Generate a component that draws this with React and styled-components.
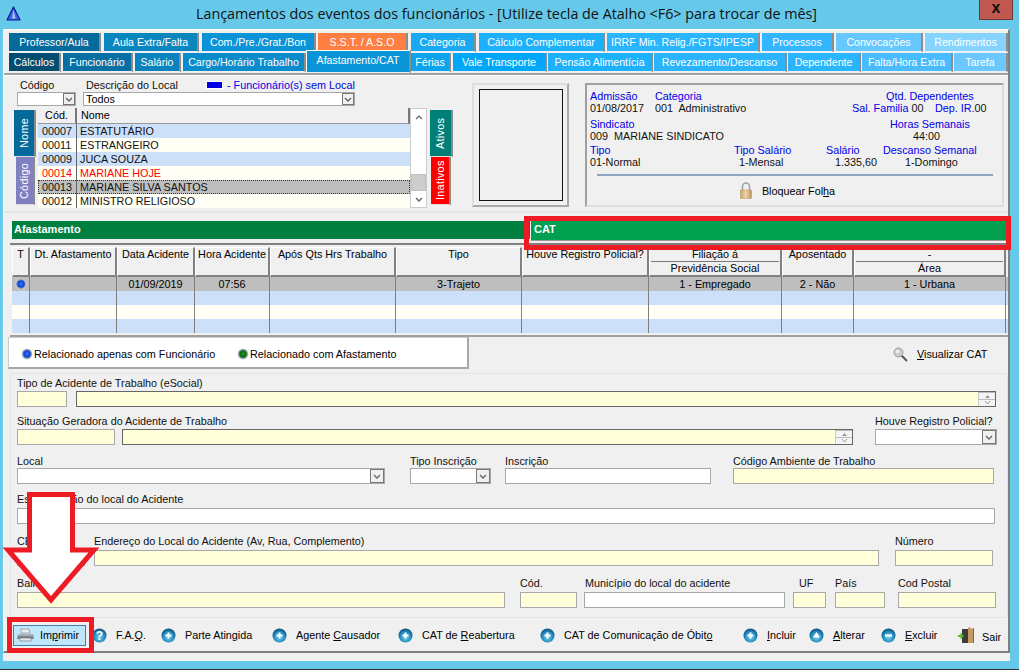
import React from 'react';
import styled, { createGlobalStyle } from 'styled-components';

const FONT = `'Liberation Sans', Arial, sans-serif`;

const GlobalStyle = createGlobalStyle`
  html, body { margin: 0; padding: 0; background: #66c9ea; }
  * { box-sizing: border-box; }
  body { font-family: ${FONT}; font-size: 10.8px; color: #000; }
`;

const Root = styled.div`
  position: relative;
  width: 1019px;
  height: 670px;
  overflow: hidden;
  background: #66c9ea;
  border-bottom: 1px solid #333;
`;

const TitleBar = styled.div`
  display: flex;
  align-items: flex-start;
  height: 29px;
  padding-left: 6px;
`;

const Logo = styled.svg`
  width: 15px;
  height: 15px;
  margin-top: 6px;
`;

const Title = styled.div`
  flex: 1;
  text-align: center;
  font-family: 'Open Sans', 'Noto Sans', sans-serif;
  font-size: 14.35px;
  line-height: 28px;
  color: #111;
  white-space: nowrap;
  padding-left: 13px;
`;

const CloseButton = styled.div`
  width: 34px;
  height: 20px;
  margin-right: 6px;
  background: #c0584f;
  border: 1px solid #6e3a36;
  border-top: 0;
  color: #111;
  font: bold 16px/15px 'Liberation Sans', sans-serif;
  text-align: center;
`;

const Body = styled.div`
  width: 1007px;
  height: 632px;
  margin-left: 3px;
  background: #f0f0f0;
`;

const Frame = styled.div`
  height: 624px;
  border-right: 2px solid #808080;
  border-bottom: 2px solid #808080;
  border-top: 1px solid #fff;
  border-left: 1px solid #fff;
`;

const TabRows = styled.div`
  padding: 3px 0 0 5px;
`;

const TabRow = styled.div`
  display: flex;
  height: 20px;
`;

const Tab = styled.div`
  width: ${(p) => p.$w}px;
  margin-right: ${(p) => p.$gap}px;
  height: ${(p) => (p.$active ? 23 : 19)}px;
  margin-top: ${(p) => (p.$active ? -3 : 0)}px;
  position: relative;
  z-index: ${(p) => (p.$active ? 2 : 0)};
  background: ${(p) => p.$bg};
  color: #fff;
  border-right: 2px solid #8c8c8c;
  border-bottom: 1px solid #f0f0f0;
  border-top: ${(p) => (p.$active ? '1px solid #fff' : '0')};
  border-left: ${(p) => (p.$active ? '1px solid #fff' : '0')};
  text-align: center;
  font-size: 10.6px;
  line-height: ${(p) => (p.$active ? 19 : 18)}px;
  white-space: nowrap;
  overflow: hidden;
`;

const TopPanel = styled.div`
  display: flex;
  height: 140px;
  border-top: 2px solid #a0a0a0;
  border-bottom: 2px solid #e4e4e4;
  box-shadow: inset 0 1px 0 #fff;
  padding: 2px 0 0 10px;
`;

const LeftColumn = styled.div`
  width: 415px;
  flex: none;
`;

const FilterRow = styled.div`
  display: flex;
`;

const Field = styled.div`
  width: ${(p) => p.$w}px;
  margin-left: ${(p) => p.$ml || 0}px;
  flex: none;
`;

const Label = styled.div`
  display: flex;
  align-items: center;
  height: 15px;
  line-height: 14px;
  white-space: nowrap;
  padding-left: ${(p) => p.$pad || 0}px;
  color: #111;
`;

const LocalLabel = styled.span`
  width: 121px;
  flex: none;
`;

const Swatch = styled.span`
  width: 15px;
  height: 6px;
  margin-right: 5px;
  background: #0000e0;
  box-shadow: 0 0 0 1px #fff;
  flex: none;
`;

const BlueText = styled.span`
  color: #0000e6;
`;

const Input = styled.div`
  position: relative;
  display: flex;
  justify-content: flex-end;
  align-items: center;
  height: ${(p) => p.$h || 16}px;
  background: ${(p) => (p.$yellow ? '#ffffd9' : '#fff')};
  border: 1px solid ${(p) => (p.$dark ? '#666' : '#a8a8a8')};
  line-height: 12px;
  padding-left: 2px;
`;

const InputText = styled.span`
  flex: 1;
`;

const ComboButton = styled.div`
  width: ${(p) => p.$size}px;
  height: ${(p) => p.$size}px;
  display: flex;
  align-items: center;
  justify-content: center;
  background: #f0f0f0;
  border: 1px solid #777;
`;

const Spinner = styled.div`
  display: flex;
  flex-direction: column;
  width: 17px;
  height: 14px;
  border-left: 1px solid #ccc;
`;

const SpinPart = styled.div`
  flex: 1;
  display: flex;
  align-items: center;
  justify-content: center;
  background: #f4f4f4;
  border-top: 1px solid #bbb;
`;

const ListArea = styled.div`
  display: flex;
  margin-top: 2px;
`;

const SideTabs = styled.div`
  display: flex;
  flex-direction: column;
  padding-top: 2px;
  width: ${(p) => p.$w}px;
  flex: none;
`;

const SideTab = styled.div`
  height: ${(p) => p.$h}px;
  width: ${(p) => p.$tabw || 22}px;
  margin-left: ${(p) => p.$ml || 0}px;
  background: ${(p) => p.$bg};
  color: #fff;
  writing-mode: vertical-rl;
  transform: rotate(180deg);
  display: flex;
  align-items: center;
  justify-content: center;
  line-height: 1;
  letter-spacing: 0.3px;
  border-left: 2px solid #8a8a8a;
  border-top: 1px solid #ddd;
`;

const EmployeeTable = styled.div`
  width: 372px;
  flex: none;
  margin-left: 2px;
`;

const TableHead = styled.div`
  display: flex;
  height: 16px;
  background: #f0f0f0;
  line-height: 15px;
`;

const TableHeadCell = styled.div`
  width: ${(p) => p.$w}px;
  text-align: ${(p) => (p.$center ? 'center' : 'left')};
  padding-left: ${(p) => (p.$center ? 0 : 4)}px;
  border-right: 2px solid #777;
  border-bottom: 1px solid #999;
`;

const EmpRow = styled.div`
  display: flex;
  height: 14px;
  line-height: 14px;
  background: ${(p) => p.$bg};
  color: ${(p) => p.$color || '#111'};
  outline: ${(p) => (p.$selected ? '1px dotted #333' : 'none')};
  outline-offset: -1px;
`;

const EmpCode = styled.div`
  width: 39px;
  padding-left: 4px;
  border-right: 1px solid #666;
`;

const EmpName = styled.div`
  flex: 1;
  padding-left: 3px;
`;

const ScrollBar = styled.div`
  display: flex;
  flex-direction: column;
  width: 17px;
  height: 100px;
  background: #fff;
  border: 1px solid #ccc;
  flex: none;
`;

const ScrollArrow = styled.div`
  height: 16px;
  display: flex;
  align-items: center;
  justify-content: center;
`;

const ScrollTrack = styled.div`
  flex: 1;
  display: flex;
  flex-direction: column;
  justify-content: flex-end;
`;

const ScrollThumb = styled.div`
  height: 17px;
  background: #cdcdcd;
  border: 1px solid #c0c0c0;
`;

const PhotoFrame = styled.div`
  width: 97px;
  height: 124px;
  margin: 6px 0 0 43px;
  padding: 4px 4px 4px 5px;
  border: 2px solid #a8a8a8;
  border-top-color: #ddd;
  border-left-color: #ddd;
  flex: none;
`;

const PhotoInner = styled.div`
  height: 100%;
  border: 1px solid #111;
`;

const InfoPanel = styled.div`
  width: 419px;
  height: 124px;
  margin: 6px 0 0 16px;
  padding: 5px 0 0 3px;
  border: 2px solid #a0a0a0;
  border-right-color: #ddd;
  border-bottom-color: #ddd;
  line-height: 12px;
  flex: none;
`;

const InfoLine = styled.div`
  display: flex;
  white-space: nowrap;
  margin-top: ${(p) => p.$mt || 0}px;
`;

const InfoCell = styled.div`
  flex: none;
  width: ${(p) => (p.$w ? `${p.$w}px` : 'auto')};
  color: ${(p) => (p.$blue ? '#0000e6' : '#111')};
`;

const InfoDivider = styled.div`
  height: 2px;
  width: 396px;
  margin: 6px 0 0 7px;
  background: #8fa5c0;
`;

const LockRow = styled.div`
  display: flex;
  align-items: center;
  justify-content: center;
  gap: 10px;
  margin-top: 6px;
  padding-right: 17px;
`;

const SectionBars = styled.div`
  display: flex;
  align-items: flex-start;
  height: 30px;
  padding: 8px 0 0 8px;
`;

const LeftBar = styled.div`
  width: 518px;
  height: 18px;
  background: #008040;
  color: #fff;
  font-size: 11px;
  font-weight: bold;
  line-height: 17px;
  padding-left: 2px;
`;

const RightBar = styled.div`
  width: 477px;
  height: 21px;
  margin-top: -1px;
  background: #00a050;
  color: #fff;
  font-size: 11px;
  font-weight: bold;
  line-height: 18px;
  padding-left: 3px;
  border-left: 1px solid #fff;
  border-bottom: 1px solid #999;
`;

const COLS = '18px 87px 78px 75px 126px 126px 127px 133px 72px 152px';

const Grid = styled.div`
  margin-left: 6px;
  width: 998px;
  border-top: 2px solid #808080;
  border-bottom: 2px solid #a0a0a0;
  padding: 2px 0 2px 2px;
`;

const GridHead = styled.div`
  display: grid;
  grid-template-columns: ${COLS};
  height: 30px;
`;

const HeadCell = styled.div`
  text-align: center;
  line-height: 13px;
  border-top: 1px solid #fff;
  border-left: 1px solid #fff;
  border-right: 2px solid #808080;
  border-bottom: 2px solid #808080;
  white-space: nowrap;
  overflow: hidden;
`;

const HeadLine = styled.div`
  height: 14px;
  border-bottom: ${(p) => (p.$rule ? '1px solid #777' : '0')};
  margin: 0 1px;
`;

const GridRow = styled.div`
  display: grid;
  grid-template-columns: ${COLS};
  height: 14px;
  background: ${(p) => p.$bg};
`;

const GridCell = styled.div`
  display: flex;
  align-items: center;
  justify-content: center;
  line-height: 14px;
  border-right: 1px solid #808080;
`;

const LegendRow = styled.div`
  display: flex;
  align-items: center;
  height: 32px;
`;

const LegendBox = styled.div`
  display: flex;
  align-items: center;
  width: 461px;
  height: 32px;
  margin-left: 4px;
  padding: 2px 0 0 12px;
  background: #fff;
  border: 1px solid #ccc;
  border-right: 2px solid #a8a8a8;
  border-bottom: 2px solid #a8a8a8;
`;

const LegendItem = styled.div`
  display: flex;
  align-items: center;
  gap: 1px;
  width: ${(p) => p.$w}px;
  flex: none;
  white-space: nowrap;
`;

const ViewLink = styled.div`
  display: flex;
  align-items: center;
  gap: 9px;
  margin: 2px 0 0 424px;
  white-space: nowrap;
`;

const FormBox = styled.div`
  width: 998px;
  height: 245px;
  margin: 4px 0 0 6px;
  padding: 2px 0 0 6px;
  border: 1px solid #dfe6ea;
  border-radius: 3px;
`;

const FormRow = styled.div`
  display: flex;
  align-items: flex-end;
  margin-top: ${(p) => p.$mt || 0}px;

  ${Label} {
    padding-bottom: ${(p) => p.$lift || 0}px;
  }
`;

const Toolbar = styled.div`
  display: flex;
  align-items: center;
  height: 33px;
  padding: 1px 0 0 9px;
`;

const PrintButton = styled.div`
  display: flex;
  align-items: center;
  gap: 6px;
  width: 73px;
  height: 21px;
  margin-right: 6px;
  padding-left: 3px;
  background: #bee6fd;
  border: 1px solid #3c7fb1;
  flex: none;
`;

const ToolItem = styled.div`
  display: flex;
  align-items: center;
  gap: ${(p) => p.$gap || 9}px;
  width: ${(p) => p.$w}px;
  flex: none;
  white-space: nowrap;
`;

const ExitText = styled.span`
  padding-top: 3px;
`;

const RedBox = styled.div`
  position: absolute;
  left: ${(p) => p.$x}px;
  top: ${(p) => p.$y}px;
  width: ${(p) => p.$w}px;
  height: ${(p) => p.$h}px;
  border: 5px solid #ed1c24;
  pointer-events: none;
`;

const ArrowMark = styled.svg`
  position: absolute;
  left: 0;
  top: 488px;
  width: 104px;
  height: 120px;
`;

const Chevron = () => (
  <svg width="8" height="5" viewBox="0 0 8 5">
    <path d="M1 1l3 3 3-3" fill="none" stroke="#666" strokeWidth="1.4" />
  </svg>
);

const ChevronUp = () => (
  <svg width="8" height="5" viewBox="0 0 8 5">
    <path d="M1 4l3-3 3 3" fill="none" stroke="#666" strokeWidth="1.2" />
  </svg>
);

const Combo = ({ text, h = 16 }) => (
  <Input $h={h}>
    <InputText>{text}</InputText>
    <ComboButton $size={h - 2}><Chevron /></ComboButton>
  </Input>
);

const SpinInput = () => (
  <Input $yellow $dark>
    <Spinner>
      <SpinPart><svg width="5" height="3"><path d="M0 3l2.5-3 2.5 3z" fill="#999" /></svg></SpinPart>
      <SpinPart><svg width="7" height="4"><path d="M1 0l2.5 3 2.5-3" fill="none" stroke="#999" /></svg></SpinPart>
    </Spinner>
  </Input>
);

const Orb = ({ kind }) => (
  <svg width="15" height="15" viewBox="0 0 15 15">
    <defs>
      <radialGradient id={`orb-${kind}`} cx="50%" cy="62%" r="58%">
        <stop offset="0" stopColor="#7fd0ee" />
        <stop offset="0.6" stopColor="#2a93c4" />
        <stop offset="1" stopColor="#0a5684" />
      </radialGradient>
    </defs>
    <circle cx="7.5" cy="7.5" r="7" fill={`url(#orb-${kind})`} />
    {kind === 'plus' && <path d="M7.5 4.5v6M4.5 7.5h6" stroke="#fff" strokeWidth="2" />}
    {kind === 'minus' && <path d="M4 7.5h7" stroke="#fff" strokeWidth="2.4" />}
    {kind === 'up' && <path d="M7.5 4l3.5 5.5H4z" fill="#fff" />}
    {kind === 'help' && (
      <text x="7.5" y="12" fontSize="12" fontWeight="bold" textAnchor="middle" fill="#fff" fontFamily="Liberation Sans">?</text>
    )}
  </svg>
);

const Dot = ({ color, id }) => (
  <svg width="12" height="12" viewBox="0 0 12 12">
    <defs>
      <radialGradient id={id} cx="50%" cy="50%" r="50%">
        <stop offset="0" stopColor={color[0]} />
        <stop offset="0.55" stopColor={color[1]} />
        <stop offset="0.8" stopColor="#8a9cb0" />
        <stop offset="1" stopColor="#d8dee4" />
      </radialGradient>
    </defs>
    <circle cx="6" cy="6" r="5.5" fill={`url(#${id})`} />
  </svg>
);

const PrinterIcon = () => (
  <svg width="17" height="14" viewBox="0 0 17 14" style={{ flex: 'none' }}>
    <path d="M4 1h8l1 4H4z" fill="#e8ecef" stroke="#8a9198" strokeWidth=".7" />
    <path d="M1 6h15l1 5H0z" fill="#7c858d" />
    <path d="M1 6h15v2H1z" fill="#a7afb6" />
    <path d="M3 10h11v3H3z" fill="#e4e8ec" stroke="#6a7178" strokeWidth=".6" />
  </svg>
);

const LockIcon = () => (
  <svg width="12" height="17" viewBox="0 0 12 17">
    <defs>
      <linearGradient id="lock-body" x1="0" x2="1" y1="0" y2="0">
        <stop offset="0" stopColor="#c9a26b" />
        <stop offset="0.5" stopColor="#f0d5a8" />
        <stop offset="1" stopColor="#b8935c" />
      </linearGradient>
    </defs>
    <path d="M2.5 8V4.5a3.5 3.5 0 0 1 7 0V8" fill="none" stroke="#9aa0a6" strokeWidth="1.5" />
    <rect x="0.5" y="8" width="11" height="8.5" fill="url(#lock-body)" stroke="#b8935c" strokeWidth=".5" />
  </svg>
);

const LensIcon = () => (
  <svg width="15" height="15" viewBox="0 0 15 15">
    <path d="M8 8l6 6" stroke="#555" strokeWidth="2" />
    <circle cx="5.5" cy="5.5" r="4.5" fill="#c8ccd0" stroke="#9a9a9a" />
    <circle cx="4.5" cy="4.5" r="1.8" fill="#eef0f2" />
  </svg>
);

const DoorIcon = () => (
  <svg width="16" height="16" viewBox="0 0 16 16">
    <path d="M4 2h12v14H4z" fill="#3c3c36" />
    <path d="M10 0l5 2v14h-5z" fill="#c79a63" />
    <path d="M15 1h1v15h-1z" fill="#8a6438" />
    <path d="M0 8h2.5V5.5L6 9l-3.5 3.5V10H0z" fill="#62b02e" />
  </svg>
);

const ROW_ONE = [
  ['Professor/Aula', 92, 3, '#046a9b'],
  ['Aula Extra/Falta', 95, 3, '#0a86bf'],
  ['Com./Pre./Grat./Bon', 114, 2, '#0a93d6'],
  ['S.S.T. / A.S.O', 90, 3, '#ff7f42'],
  ['Categoria', 65, 3, '#1aa8f0'],
  ['Cálculo Complementar', 126, 2, '#1eb0fb'],
  ['IRRF Min. Relig./FGTS/IPESP', 153, 2, '#2ab5ff'],
  ['Processos', 72, 2, '#33b5ff'],
  ['Convocações', 87, 2, '#66c8ff'],
  ['Rendimentos', 83, 0, '#85d4ff'],
];

const ROW_TWO = [
  ['Cálculos', 52, 2, '#034d70'],
  ['Funcionário', 70, 2, '#086fa4'],
  ['Salário', 46, 2, '#0a82bd'],
  ['Cargo/Horário Trabalho', 123, 0, '#0a8bcb'],
  ['Afastamento/CAT', 105, 0, '#0a94d8', true],
  ['Férias', 40, 2, '#0ca3ea'],
  ['Vale Transporte', 94, 1, '#00a7f9'],
  ['Pensão Alimentícia', 105, 1, '#1db0fb'],
  ['Revezamento/Descanso', 133, 1, '#2ab4fc'],
  ['Dependente', 73, 1, '#2ab5ff'],
  ['Falta/Hora Extra', 91, 1, '#48bcff'],
  ['Tarefa', 54, 0, '#6bc8ff'],
];

const EMPLOYEES = [
  ['00007', 'ESTATUTÁRIO', '#cce0fa'],
  ['00011', 'ESTRANGEIRO', '#fffff6'],
  ['00009', 'JUCA SOUZA', '#cce0fa'],
  ['00014', 'MARIANE HOJE', '#fffff6', '#ff0000'],
  ['00013', 'MARIANE SILVA SANTOS', '#bebebe', null, true],
  ['00012', 'MINISTRO RELIGIOSO', '#fffff6'],
];

const HEADERS = ['T', 'Dt. Afastamento', 'Data Acidente', 'Hora Acidente', 'Após Qts Hrs Trabalho', 'Tipo', 'Houve Registro Policial?'];

const App = () => (
  <Root>
    <GlobalStyle />
    <TitleBar>
      <Logo viewBox="0 0 15 15">
        <path d="M7.5 1L14 14H1z" fill="#3f63e6" stroke="#0a1a8c" strokeWidth="1.2" strokeLinejoin="round" />
        <path d="M7.5 3.5L9.5 12.5H6z" fill="#a8c4ff" />
      </Logo>
      <Title>Lançamentos dos eventos dos funcionários - [Utilize tecla de Atalho &lt;F6&gt; para trocar de mês]</Title>
      <CloseButton>x</CloseButton>
    </TitleBar>
    <Body>
      <Frame>
        <TabRows>
          <TabRow>
            {ROW_ONE.map(([t, w, g, bg]) => (
              <Tab key={t} $w={w} $gap={g} $bg={bg}>{t}</Tab>
            ))}
          </TabRow>
          <TabRow>
            {ROW_TWO.map(([t, w, g, bg, active]) => (
              <Tab key={t} $w={w} $gap={g} $bg={bg} $active={active}>{t}</Tab>
            ))}
          </TabRow>
        </TabRows>

        <TopPanel>
          <LeftColumn>
            <FilterRow>
              <Field $w={59} $ml={3}>
                <Label $pad={3}>Código</Label>
                <Combo h={14} />
              </Field>
              <Field $w={272} $ml={7}>
                <Label $pad={3}>
                  <LocalLabel>Descrição do Local</LocalLabel>
                  <Swatch />
                  <BlueText>- Funcionário(s) sem Local</BlueText>
                </Label>
                <Combo h={14} text="Todos" />
              </Field>
            </FilterRow>
            <ListArea>
              <SideTabs $w={22}>
                <SideTab $h={47} $bg="#046a9b">Nome</SideTab>
                <SideTab $h={48} $tabw={19} $ml={2} $bg="#8080c0">Código</SideTab>
              </SideTabs>
              <EmployeeTable>
                <TableHead>
                  <TableHeadCell $w={39} $center>Cód.</TableHeadCell>
                  <TableHeadCell $w={333}>Nome</TableHeadCell>
                </TableHead>
                {EMPLOYEES.map(([code, name, bg, color, sel]) => (
                  <EmpRow key={code} $bg={bg} $color={color} $selected={sel}>
                    <EmpCode>{code}</EmpCode>
                    <EmpName>{name}</EmpName>
                  </EmpRow>
                ))}
              </EmployeeTable>
              <ScrollBar>
                <ScrollArrow><ChevronUp /></ScrollArrow>
                <ScrollTrack><ScrollThumb /></ScrollTrack>
                <ScrollArrow><Chevron /></ScrollArrow>
              </ScrollBar>
              <SideTabs $w={24}>
                <SideTab $h={47} $tabw={23} $ml={3} $bg="#007f78">Ativos</SideTab>
                <SideTab $h={48} $tabw={20} $ml={4} $bg="#ff0000">Inativos</SideTab>
              </SideTabs>
            </ListArea>
          </LeftColumn>

          <PhotoFrame><PhotoInner /></PhotoFrame>

          <InfoPanel>
            <InfoLine>
              <InfoCell $w={65} $blue>Admissão</InfoCell>
              <InfoCell $w={231} $blue>Categoria</InfoCell>
              <InfoCell $blue>Qtd. Dependentes</InfoCell>
            </InfoLine>
            <InfoLine>
              <InfoCell $w={65}>01/08/2017</InfoCell>
              <InfoCell $w={197}>001&nbsp; Administrativo</InfoCell>
              <InfoCell $w={83}><BlueText>Sal. Familia</BlueText> 00</InfoCell>
              <InfoCell><BlueText>Dep. IR.</BlueText>00</InfoCell>
            </InfoLine>
            <InfoLine $mt={4}>
              <InfoCell $w={300} $blue>Sindicato</InfoCell>
              <InfoCell $blue>Horas Semanais</InfoCell>
            </InfoLine>
            <InfoLine>
              <InfoCell $w={323}>009&nbsp; MARIANE SINDICATO</InfoCell>
              <InfoCell>44:00</InfoCell>
            </InfoLine>
            <InfoLine $mt={2}>
              <InfoCell $w={144} $blue>Tipo</InfoCell>
              <InfoCell $w={92} $blue>Tipo Salário</InfoCell>
              <InfoCell $w={57} $blue>Salário</InfoCell>
              <InfoCell $blue>Descanso Semanal</InfoCell>
            </InfoLine>
            <InfoLine>
              <InfoCell $w={149}>01-Normal</InfoCell>
              <InfoCell $w={96}>1-Mensal</InfoCell>
              <InfoCell $w={70}>1.335,60</InfoCell>
              <InfoCell>1-Domingo</InfoCell>
            </InfoLine>
            <InfoDivider />
            <LockRow>
              <LockIcon />
              <span>Bloquear Fol<u>h</u>a</span>
            </LockRow>
          </InfoPanel>
        </TopPanel>

        <SectionBars>
          <LeftBar>Afastamento</LeftBar>
          <RightBar>CAT</RightBar>
        </SectionBars>

        <Grid>
          <GridHead>
            {HEADERS.map((h) => (
              <HeadCell key={h}>{h}</HeadCell>
            ))}
            <HeadCell>
              <HeadLine $rule>Filiação á</HeadLine>
              <HeadLine>Previdência Social</HeadLine>
            </HeadCell>
            <HeadCell>Aposentado</HeadCell>
            <HeadCell>
              <HeadLine $rule>-</HeadLine>
              <HeadLine>Área</HeadLine>
            </HeadCell>
          </GridHead>
          <GridRow $bg="#bebebe">
            <GridCell><Dot id="dot-row" color={['#3a7cff', '#0b3fd8']} /></GridCell>
            <GridCell />
            <GridCell>01/09/2019</GridCell>
            <GridCell>07:56</GridCell>
            <GridCell />
            <GridCell>3-Trajeto</GridCell>
            <GridCell />
            <GridCell>1 - Empregado</GridCell>
            <GridCell>2 - Não</GridCell>
            <GridCell>1 - Urbana</GridCell>
          </GridRow>
          {['#cce0fa', '#fffff6', '#cce0fa'].map((bg, i) => (
            <GridRow key={i} $bg={bg}>
              {HEADERS.concat(['a', 'b', 'c']).map((h) => <GridCell key={h} />)}
            </GridRow>
          ))}
        </Grid>

        <LegendRow>
          <LegendBox>
            <LegendItem $w={216}><Dot id="dot-blue" color={['#3a7cff', '#0b3fd8']} />Relacionado apenas com Funcionário</LegendItem>
            <LegendItem $w={200}><Dot id="dot-green" color={['#1f9a1f', '#0a6a0a']} />Relacionado com Afastamento</LegendItem>
          </LegendBox>
          <ViewLink><LensIcon /><span><u>V</u>isualizar CAT</span></ViewLink>
        </LegendRow>

        <FormBox>
          <FormRow $lift={2}>
            <Field $w={50}><Label>Tipo de Acidente de Trabalho (eSocial)</Label><Input $yellow /></Field>
            <Field $w={920} $ml={9}><Label /><SpinInput /></Field>
          </FormRow>
          <FormRow $mt={7} $lift={2}>
            <Field $w={98}><Label>Situação Geradora do Acidente de Trabalho</Label><Input $yellow /></Field>
            <Field $w={731} $ml={7}><Label /><SpinInput /></Field>
            <Field $w={122} $ml={22}><Label>Houve Registro Policial?</Label><Combo /></Field>
          </FormRow>
          <FormRow $mt={8}>
            <Field $w={368}><Label>Local</Label><Combo /></Field>
            <Field $w={81} $ml={25}><Label>Tipo Inscrição</Label><Combo /></Field>
            <Field $w={206} $ml={14}><Label>Inscrição</Label><Input /></Field>
            <Field $w={261} $ml={22}><Label>Código Ambiente de Trabalho</Label><Input $yellow /></Field>
          </FormRow>
          <FormRow $mt={9} $lift={4}>
            <Field $w={978}><Label>Especificação do local do Acidente</Label><Input /></Field>
          </FormRow>
          <FormRow $mt={11} $lift={4}>
            <Field $w={68}><Label>CEP</Label><Input $yellow /></Field>
            <Field $w={785} $ml={9}><Label>Endereço do Local do Acidente (Av, Rua, Complemento)</Label><Input $yellow /></Field>
            <Field $w={98} $ml={16}><Label>Número</Label><Input $yellow /></Field>
          </FormRow>
          <FormRow $mt={11} $lift={4}>
            <Field $w={488}><Label>Bairro</Label><Input $yellow /></Field>
            <Field $w={57} $ml={15}><Label>Cód.</Label><Input $yellow /></Field>
            <Field $w={201} $ml={7}><Label $pad={1}>Município do local do acidente</Label><Input /></Field>
            <Field $w={33} $ml={8}><Label $pad={6}>UF</Label><Input $yellow /></Field>
            <Field $w={50} $ml={9}><Label>País</Label><Input $yellow /></Field>
            <Field $w={98} $ml={13}><Label>Cod Postal</Label><Input $yellow /></Field>
          </FormRow>
        </FormBox>

        <Toolbar>
          <PrintButton><PrinterIcon /><span>Im<u>p</u>rimir</span></PrintButton>
          <ToolItem $w={69}><Orb kind="help" /><span>F.A.<u>Q</u>.</span></ToolItem>
          <ToolItem $w={111}><Orb kind="plus" />Parte Atingida</ToolItem>
          <ToolItem $w={126}><Orb kind="plus" /><span>Agente <u>C</u>ausador</span></ToolItem>
          <ToolItem $w={142}><Orb kind="plus" /><span>CAT de <u>R</u>eabertura</span></ToolItem>
          <ToolItem $w={203}><Orb kind="plus" /><span>CAT de Comunicação de Óbit<u>o</u></span></ToolItem>
          <ToolItem $w={66}><Orb kind="plus" /><span><u>I</u>ncluir</span></ToolItem>
          <ToolItem $w={72}><Orb kind="up" /><span><u>A</u>lterar</span></ToolItem>
          <ToolItem $w={77}><Orb kind="minus" /><span><u>E</u>xcluir</span></ToolItem>
          <ToolItem $w={45} $gap={8}><DoorIcon /><ExitText>Sair</ExitText></ToolItem>
        </Toolbar>
      </Frame>
    </Body>

    <RedBox $x={524} $y={216} $w={487} $h={34} />
    <RedBox $x={7} $y={617} $w={87} $h={36} />
    <ArrowMark viewBox="0 0 104 120">
      <polygon
        points="29.5,6.5 72.5,6.5 72.5,62 94,62 51,112 8,62 29.5,62"
        fill="#fff"
        stroke="#ed1c24"
        strokeWidth="5"
      />
    </ArrowMark>
  </Root>
);

export default App;
